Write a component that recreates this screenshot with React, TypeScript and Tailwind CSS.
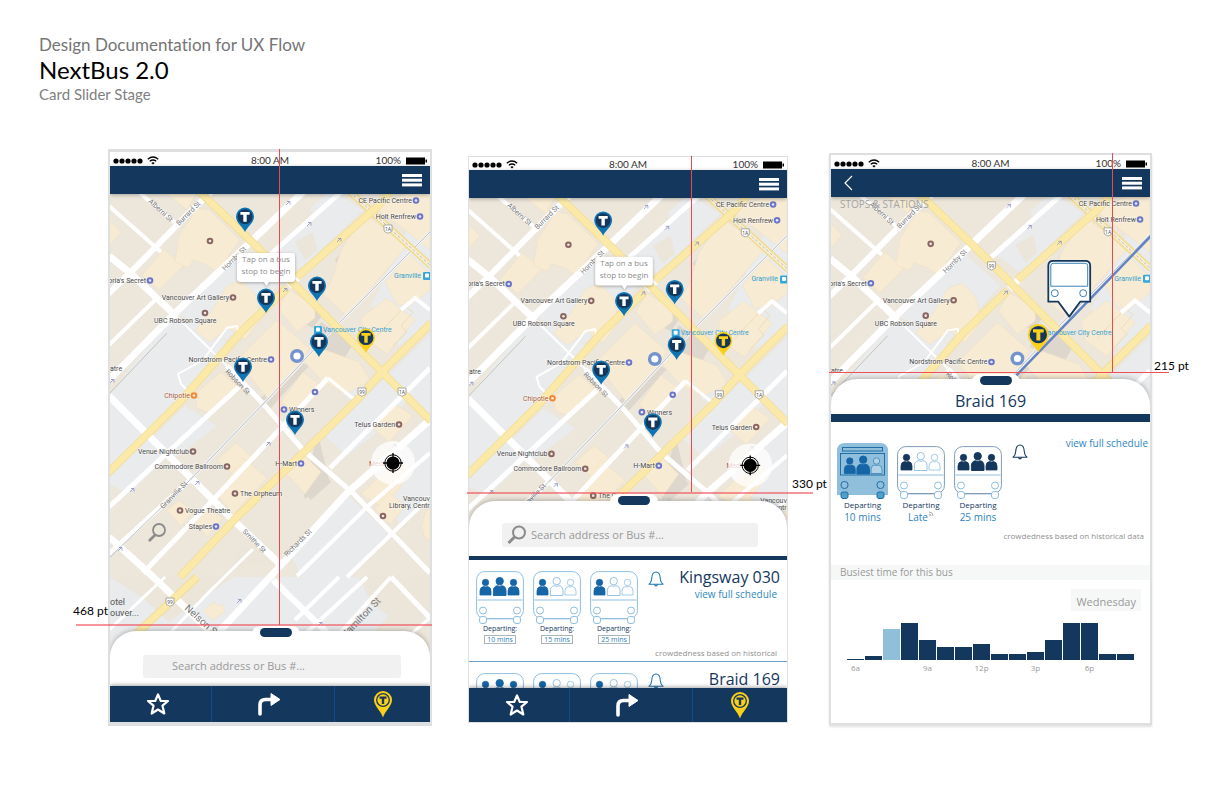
import React, { type ReactNode } from "react";

const NAVY = "#14375e";

/* ---------- Map ---------- */

const greyBlocks = [
  "1,199 60,126 106,131 118,150 106,170 0,278",
  "68,120 134,56 171,89 118,146 96,132",
  "0,288 76,212 108,232 60,268 0,214",
  "231,1 254,16 191,76 164,56",
  "201,14 218,0 232,0 206,26",
  "0,200 60,262 20,300 0,290",
  "300,32 321,22 321,128 290,152 262,112",
  "270,190 321,140 321,224 300,204 276,232 238,262 214,240",
  "262,276 321,228 321,300 290,330",
  "180,355 240,302 280,340 240,383 192,383",
  "0,383 321,383 321,492 0,492",
  "236,170 262,186 272,178 258,196 240,206 222,188",
];

const tanBlocks = [
  "186,48 204,38 208,56 196,66",
  "0,383 125,383 96,402 60,428 34,404",
  "250,383 321,383 321,420 290,430 262,408",
  "235,470 300,400 321,430 321,492 235,492",
  "125,352 162,352 162,372 125,372",
];

const shade = [
  "182,98 214,120 204,134 172,118",
  "212,128 244,150 232,170 200,150",
  "150,206 188,166 200,172 160,216",
  "209,240 220,286 196,305 194,296",
  "226,66 262,24 268,30 232,74",
  "206,264 222,288 202,306 194,298",
];

const buildings = [
  "55,55 74,72 50,96 33,81",
  "-2,24 12,38 -2,54",
  "70,42 88,14 100,16 131,46 108,78 96,70 84,66 80,74 66,68",
  "56,-2 88,-2 78,16",
  "118,92 132,86 146,100 152,124 136,146 120,134 100,148 86,136 102,118",
  "180,96 206,112 206,124 188,138 169,114",
  "232,56 256,20 298,52 238,122 214,100 222,88",
  "266,14 300,-2 321,-2 321,56 296,36",
  "276,88 300,60 321,80 321,96 300,112 288,110",
  "252,124 278,104 306,126 278,160 256,144",
  "128,166 168,126 200,154 192,172 160,206",
  "205,152 250,168 260,184 256,190 236,200 212,186 196,168",
  "86,200 112,178 130,194 104,220 88,214",
  "172,208 194,178 212,192 188,222",
  "108,266 127,249 142,262 124,280",
  "108,300 134,264 158,284 124,320",
  "176,278 196,262 212,278 196,300",
  "262,232 286,210 304,222 280,248",
  "252,300 290,264 302,278 276,314",
  "266,316 280,298 296,312 282,330",
  "58,316 70,307 84,317 72,332",
  "84,326 98,314 114,324 98,343",
  "95,417 104,408 109,412 113,410 116,418 104,426",
  "313,334 316,318 321,314 321,346 316,344",
];

const streets: [string, number][] = [
  ["31,-1 71,33", 4],
  ["0,12 52,58", 4],
  ["104,-4 81,18 21,79 -1,100", 6],
  ["196,-4 132,57 65,120 0,186", 7],
  ["232,-2 162,60", 5],
  ["193,79 180,92", 7],
  ["0,62 21,79 68,123", 7],
  ["68,123 118,172", 2],
  ["118,172 158,214 194,256 244,299 321,379", 5],
  ["0,202 61,263 121,323 174,373", 7],
  ["164,386 240,460", 6],
  ["0,343 41,380 104,440", 7],
  ["131,192 58,259 0,313", 5],
  ["219,184 174,232 104,306 34,379", 5],
  ["219,184 246,206", 3],
  ["46,106 0,151", 4],
  ["94,166 69,180 72,190 80,198", 2],
  ["94,166 118,134 128,132 130,142", 2],
  ["321,174 221,274", 5],
  ["321,226 238,299 174,369 108,440", 7],
  ["321,259 258,313 188,382", 4],
  ["321,303 238,383", 4],
  ["81,286 0,360", 5],
  ["292,116 306,104 321,116", 4],
  ["56,383 0,436", 3],
  ["144,355 100,398 60,440", 3],
  ["258,383 196,440", 4],
  ["230,383 186,426", 4],
  ["282,383 230,440", 4],
  ["282,383 321,424", 5],
  ["321,424 290,450", 3],
];

const yellows = [
  "281,-2 268,13 188,83",
  "178,94 134,136 71,208 -2,280",
  "91,-2 144,49 184,89 273,178 322,227",
  "322,129 273,178 248,206 194,259 128,323 71,383",
  "88,383 22,445",
];

const BROWN = "#8a6660";
const VIOLET = "#6c74c9";
const ORANGE = "#f58634";

type Poi = { x: number; y: number; t: string; end?: boolean; dot?: string; ink?: string };

const pois: Poi[] = [
  { x: 303, y: 9, t: "CE Pacific Centre", end: true, dot: VIOLET },
  { x: 307, y: 25, t: "Holt Renfrew", end: true, dot: VIOLET },
  { x: 37, y: 89, t: "oria's Secret", end: true, dot: VIOLET },
  { x: 120, y: 106, t: "Vancouver Art Gallery", end: true, dot: BROWN },
  { x: 45, y: 129, t: "UBC Robson Square" },
  { x: 158, y: 168, t: "Nordstrom Pacific Centre", end: true, dot: VIOLET },
  { x: 1, y: 177, t: "atre" },
  { x: 81, y: 204, t: "Chipotle", end: true, dot: ORANGE, ink: "#a65a3c" },
  { x: 180, y: 218, t: "Winners", dot: VIOLET },
  { x: 286, y: 233, t: "Telus Garden", end: true, dot: BROWN },
  { x: 80, y: 260, t: "Venue Nightclub", end: true, dot: BROWN },
  { x: 114, y: 275, t: "Commodore Ballroom", end: true, dot: BROWN },
  { x: 188, y: 272, t: "H-Mart", end: true, dot: VIOLET },
  { x: 260, y: 272, t: "Medi", ink: "#a8483f" },
  { x: 131, y: 302, t: "The Orpheum", dot: BROWN },
  { x: 76, y: 319, t: "Vogue Theatre", dot: BROWN },
  { x: 103, y: 335, t: "Staples", end: true, dot: VIOLET },
  { x: 294, y: 307, t: "Vancouver" },
  { x: 280, y: 314, t: "Library, Central" },
];

const streetNames: [number, number, number, string][] = [
  [39, 8, 42, "Alberni St"],
  [70, 32, -45, "Burrard St"],
  [116, 77, -45, "Hornby St"],
  [116, 178, 46, "Robson St"],
  [54, 315, -45, "Granville St"],
  [133, 338, 45, "Smithe St"],
  [178, 363, -45, "Richards St"],
];

const shields: [number, number, string][] = [
  [279, 35, "1A"],
  [162, 69, "99"],
  [253, 198, "99"],
  [293, 198, "1A"],
  [61, 408, "99"],
];

const oneWays = [
  [179, 9], [200, 30], [230, 46], [176, 96], [159, 250], [88, 289],
  [23, 296], [285, 252], [130, 407], [211, 430], [11, 355], [3, 187],
];

function Dot({ x, y, c }: { x: number; y: number; c: string }) {
  return (
    <g>
      <circle cx={x} cy={y} r="3.300" fill={c} />
      <circle cx={x} cy={y} r="1.300" fill="#fff" opacity="0.85" />
    </g>
  );
}

function Shield({ x, y, t }: { x: number; y: number; t: string }) {
  return (
    <g>
      <path
        d={`M${x - 4} ${y - 4}h8v5q0 2 -2.5 2.5l-1.5 .8l-1.5 -.8q-2.5 -.5 -2.5 -2.5z`}
        fill="#fff"
        stroke="#8b8b8b"
        strokeWidth="0.7"
      />
      <text x={x} y={y + 2} fontSize="5" textAnchor="middle" fill="#555">
        {t}
      </text>
    </g>
  );
}

function CityMap({ className, depth, children }: { className: string; depth: number; children?: ReactNode }) {
  return (
    <svg
      viewBox="1 0 320 464"
      preserveAspectRatio="xMinYMin slice"
      className={`block w-full font-[Roboto,sans-serif] ${className}`}
      role="img"
      aria-label="Map of downtown Vancouver"
    >
      <rect x="0" y="0" width="322" height="492" fill="#ece6db" />
      {greyBlocks.map((p) => (
        <polygon key={p} points={p} fill="#e9ebed" />
      ))}
      {tanBlocks.map((p) => (
        <polygon key={p} points={p} fill="#ece5d9" />
      ))}
      {shade.map((p) => (
        <polygon key={p} points={p} fill="#ddd7ce" />
      ))}
      {buildings.map((p) => (
        <polygon key={p} points={p} fill="#f8ebd3" stroke="#f0dfc0" strokeWidth="0.5" />
      ))}
      <polyline points="268,142 296,112 304,118 292,132 298,138 284,152" stroke="#ecd9ae" strokeWidth="0.8" fill="none" />
      {streets.map(([p, w]) => (
        <polyline key={p} points={p} fill="none" stroke="#fff" strokeWidth={w} />
      ))}
      <polyline points="58,139 0,200" stroke="#bdb9a6" strokeWidth="0.8" fill="none" />
      <polyline points="321,38 226,133 158,206 81,286" stroke="#f3f3f3" strokeWidth="3" fill="none" />
      <polyline points="321,38 226,133 158,206 81,286 1,363" stroke="#b0b4bb" strokeWidth="0.8" fill="none" />
      <polyline points="241,-2 322,72" stroke="#f2dc92" strokeWidth="7" fill="none" />
      <polyline points="241,-2 322,72" stroke="#f5efdc" strokeWidth="3.500" fill="none" />
      <polyline points="241,-2 322,72" stroke="#a39a80" strokeWidth="0.6" strokeDasharray="3 2" fill="none" />
      {yellows.map((p) => (
        <polyline key={p} points={p} fill="none" stroke="#f3dd93" strokeWidth="8" strokeLinejoin="round" />
      ))}
      {yellows.map((p) => (
        <polyline key={p} points={p} fill="none" stroke="#fbe9a9" strokeWidth="6.500" strokeLinejoin="round" />
      ))}
      {oneWays.map(([x, y]) => (
        <path key={`${x}-${y}`} d={`M${x - 2} ${y + 2}l4 -4m-3 .5h3v3`} stroke="#8b93c4" strokeWidth="0.8" fill="none" />
      ))}
      {streetNames.filter(([, y]) => y < depth).map(([x, y, a, t]) => (
        <text key={t} x={x} y={y} transform={`rotate(${a} ${x} ${y})`} fontSize="7" fill="#777">
          {t}
        </text>
      ))}
      {pois.filter((p) => p.y < depth).map((p) => (
        <g key={p.t}>
          <text
            x={p.x}
            y={p.y}
            fontSize="7"
            textAnchor={p.end ? "end" : "start"}
            fill={p.ink ?? "#4a4a4a"}
            stroke="#fff"
            strokeWidth="1.200"
            strokeOpacity="0.6"
            paintOrder="stroke"
          >
            {p.t}
          </text>
          {p.dot && <Dot x={p.end ? p.x + 4 : p.x - 5} y={p.y - 2.5} c={p.dot} />}
        </g>
      ))}
      <Dot x={101} y={47} c={BROWN} />
      <Dot x={96} y={119} c={BROWN} />
      <Dot x={206} y={198} c={VIOLET} />
      <Dot x={274} y={322} c={BROWN} />
      <text x="312" y="84" fontSize="7" textAnchor="end" fill="#2f9fd0">Granville</text>
      <rect x="314" y="78" width="8" height="8" rx="1" fill="#35a8dc" />
      <rect x="316" y="79.500" width="4" height="4" rx="1" fill="#fff" />
      <text x="214" y="138" fontSize="7" fill="#35a3d3">Vancouver City Centre</text>
      {shields.filter(([, y]) => y < depth).map(([x, y, t]) => (
        <Shield key={`${x}-${y}`} x={x} y={y} t={t} />
      ))}
      {depth > 420 && (
        <g>
          <text x="1" y="411" fontSize="9" fill="#555">otel</text>
          <text x="1" y="422" fontSize="9" fill="#555">ouver...</text>
          <text x="75" y="415" fontSize="10" fill="#777" transform="rotate(42 75 415)">Nelson St</text>
          <text x="236" y="445" fontSize="10" fill="#777" transform="rotate(-46 236 445)">Hamilton St</text>
        </g>
      )}
      {children}
    </svg>
  );
}

function StopPin({ x, y, color = "#0f75b2", letter = "#fff", scale = 1 }: {
  x: number; y: number; color?: string; letter?: string; scale?: number;
}) {
  return (
    <g transform={`translate(${x} ${y}) scale(${scale})`}>
      <path d="M0 0C-2 -5 -9 -9 -9 -15.500A9 9 0 0 1 9 -15.500C9 -9 2 -5 0 0Z" fill={color} />
      <circle cx="0" cy="-15.300" r="7.400" fill={NAVY} />
      <path d="M-4.600 -20H4.600V-17.200H1.700V-10.300H-1.700V-17.200H-4.600Z" fill={letter} />
    </g>
  );
}

function Here() {
  return (
    <g>
      <circle cx="188" cy="162" r="7" fill="#7394cd" />
      <circle cx="188" cy="162" r="3.600" fill="#fff" />
    </g>
  );
}

function StopsOverlay() {
  return (
    <g>
      <rect x="205" y="132" width="8" height="8" rx="1" fill="#35a8dc" />
      <rect x="207" y="133.500" width="4" height="4" rx="1" fill="#fff" />
      <Here />
      <StopPin x={136} y={38} />
      <g filter="drop-shadow(0 1px 1.500px rgba(0,0,0,.3))">
        <path d="M131 59H183a3 3 0 0 1 3 3V85a3 3 0 0 1 -3 3H160L157.500 92L155 88H131a3 3 0 0 1 -3 -3V62a3 3 0 0 1 3 -3Z" fill="#fff" />
      </g>
      <g fontFamily="'Open Sans', sans-serif" fontSize="8" fill="#8c8c8c" textAnchor="middle">
        <text x="157" y="68">Tap on a bus</text>
        <text x="157" y="80">stop to begin</text>
      </g>
      <StopPin x={157} y={119} />
      <StopPin x={208} y={107} />
      <StopPin x={210} y={163} />
      <StopPin x={134} y={188} />
      <StopPin x={186} y={241} />
      <StopPin x={257} y={159} color="#fbd01a" letter="#fbd01a" />
      <circle cx="284" cy="269" r="22" fill="#fff" opacity="0.75" />
      <circle cx="284" cy="269" r="6.600" fill="#000" />
      <circle cx="284" cy="269" r="8.200" fill="none" stroke="#000" strokeWidth="1" />
      <path d="M284 259v4M284 275v4M274 269h4M290 269h4" stroke="#000" strokeWidth="1.300" />
    </g>
  );
}

/* ---------- Phone chrome ---------- */

function StatusBar({ className = "h-[14px]" }: { className?: string }) {
  return (
    <div className={`flex items-end bg-white px-[3px] font-[Lato,'Open_Sans',sans-serif] text-[10px] leading-[11px] text-[#333] ${className}`}>
      <div className="flex flex-1 items-center gap-1 pb-[1px]">
        <svg viewBox="0 0 30 6" className="h-[6px] w-[30px]" aria-hidden="true">
          {[3, 9, 15, 21, 27].map((x) => (
            <circle key={x} cx={x} cy="3" r="2.600" />
          ))}
        </svg>
        <svg viewBox="0 0 12 9" className="h-[9px] w-[12px]" fill="none" stroke="#000" strokeWidth="1.300" aria-hidden="true">
          <path d="M.8 3.300Q6 -1.200 11.200 3.300M2.800 5.300Q6 2.700 9.200 5.300" />
          <path d="M4.300 7Q6 5.500 7.700 7L6 8.600Z" fill="#000" stroke="none" />
        </svg>
      </div>
      <span>8:00 AM</span>
      <div className="flex flex-1 items-center justify-end gap-[5px]">
        <span>100%</span>
        <svg viewBox="0 0 21 8" className="h-[8px] w-[21px]" aria-hidden="true">
          <rect x="0" y="0.500" width="19" height="7" />
          <rect x="19.500" y="2.500" width="1.500" height="3" />
        </svg>
      </div>
    </div>
  );
}

function Header({ back = false }: { back?: boolean }) {
  return (
    <div className="relative z-10 flex h-7 items-center bg-[#14375e] px-2 shadow-[0_1px_4px_rgba(0,0,0,0.3)]">
      {back && (
        <button type="button" aria-label="Back" className="ml-1">
          <svg viewBox="0 0 10 16" className="h-4 w-[10px]" fill="none" stroke="#fff" strokeWidth="1.200">
            <path d="M9 1L2 8L9 15" />
          </svg>
        </button>
      )}
      <button type="button" aria-label="Menu" className="ml-auto">
        <svg viewBox="0 0 20 13" className="h-[13px] w-5" fill="#fff">
          <rect width="20" height="3" y="0" />
          <rect width="20" height="3" y="4.700" />
          <rect width="20" height="3" y="9.400" />
        </svg>
      </button>
    </div>
  );
}

function NavBar({ className }: { className: string }) {
  return (
    <nav className={`relative z-10 grid grid-cols-[102fr_124fr_95fr] divide-x divide-[#0f4d8c] bg-[#14375e] shadow-[0_-1px_4px_rgba(0,0,0,0.35)] ${className}`}>
      <button type="button" aria-label="Favourites" className="flex items-center justify-center pr-1">
        <svg viewBox="0 0 24 24" className="h-6 w-6" fill="none" stroke="#fff" strokeWidth="2.200" strokeLinejoin="round">
          <path d="M12 2.500L14.800 9H22L16.500 13.700L18.300 21.500L12 17.500L5.700 21.500L7.500 13.700L2 9H9.200Z" />
        </svg>
      </button>
      <button type="button" aria-label="Directions" className="flex items-center justify-center pr-2">
        <svg viewBox="0 0 24 24" className="h-6 w-6" fill="none">
          <path d="M3 22V13Q3 7.500 8.500 7.500H15" stroke="#fff" strokeWidth="3.600" strokeLinecap="round" />
          <path d="M14 1.500L23 7.500L14 13.500Z" fill="#fff" stroke="#fff" strokeLinejoin="round" />
        </svg>
      </button>
      <button type="button" aria-label="Nearby stops" className="flex items-center justify-center">
        <svg viewBox="0 0 20 28" className="h-7 w-5">
          <path d="M10 27.500C8 21 1 16 1 10A9 9 0 0 1 19 10C19 16 12 21 10 27.500Z" fill="#fbd01a" />
          <circle cx="10" cy="10" r="6.300" fill="#fbd01a" stroke={NAVY} strokeWidth="1.300" />
          <path d="M6.500 6.500H13.500V8.700H11.200V14H8.800V8.700H6.500Z" fill={NAVY} />
        </svg>
      </button>
    </nav>
  );
}

function Phone({ className, guides, children }: { className: string; guides: ReactNode; children: ReactNode }) {
  return (
    <section className="relative">
      <div className={`overflow-hidden border-[#dddfe0] bg-white ${className}`}>{children}</div>
      <div className="pointer-events-none absolute inset-0 z-20 font-[Lato,'Open_Sans',sans-serif] text-[12px] leading-4 whitespace-nowrap text-black">
        {guides}
      </div>
    </section>
  );
}

function Sheet({ className = "", children }: { className?: string; children: ReactNode }) {
  return (
    <div className={`relative -mt-[27px] rounded-t-[26px] bg-white shadow-[0_-1px_5px_rgba(0,0,0,0.25)] ${className}`}>
      {children}
    </div>
  );
}

function Grip({ className }: { className: string }) {
  return (
    <button
      type="button"
      aria-label="Drag card"
      className={`absolute flex h-3 w-12 justify-center rounded-t-lg bg-white pt-[2px] ${className}`}
    >
      <span className="h-[9px] w-8 rounded-full bg-[#14375e]" />
    </button>
  );
}

/* ---------- Bus artwork ---------- */

function Person({ x, y, big, full, fill, line }: {
  x: number; y: number; big?: boolean; full: boolean; fill: string; line: string;
}) {
  return (
    <g
      transform={`translate(${x} ${y}) scale(${big ? 1.15 : 1})`}
      fill={full ? fill : "#fff"}
      fillOpacity={full ? 1 : 0.3}
      stroke={full ? fill : line}
      strokeWidth="0.8"
    >
      <path d="M-5.500 0V-4Q-5.500 -8 -2 -8.500Q0 -7.600 2 -8.500Q5.500 -8 5.500 -4V0Z" />
      <circle cx="0" cy="-12.500" r="3.200" />
    </g>
  );
}

function Bus({ riders, fill = "#1565a7", line = "#8fbfe0", frame = "#8fbfe0" }: {
  riders: number; fill?: string; line?: string; frame?: string;
}) {
  return (
    <svg viewBox="0 0 48 53" className="h-[53px] w-12" fill="none" aria-hidden="true">
      <rect x="0.600" y="0.600" width="46.800" height="47" rx="8" fill="#fff" stroke={frame} strokeWidth="1" />
      <path d="M1.500 29H46.500" stroke={line} />
      <path d="M5 47.600H43" stroke={frame} strokeWidth="1.200" />
      {[7, 41].map((x) => (
        <g key={x} stroke={line} fill="#fff">
          <circle cx={x} cy="39.500" r="3.500" />
          <rect x={x - 3.5} y="45.500" width="7" height="7" rx="2.500" />
        </g>
      ))}
      <Person x={9.5} y={24} full={riders > 0} fill={fill} line={line} />
      <Person x={37.5} y={24} full={riders > 2} fill={fill} line={line} />
      <Person x={23.7} y={24.5} big full={riders > 1} fill={fill} line={line} />
    </svg>
  );
}

function ActiveBus() {
  return (
    <svg viewBox="0 0 51 56" className="h-14 w-[51px]" fill="none" stroke="#1f6ea8" aria-hidden="true">
      <path d="M0 52V8Q0 0 8 0H43Q51 0 51 8V52Z" fill="#90bfdc" stroke="none" />
      <rect x="5.500" y="4.500" width="40" height="3.500" />
      <rect x="3.500" y="10.500" width="44" height="21.500" />
      {[7.5, 43.5].map((x) => (
        <g key={x}>
          <circle cx={x} cy="42" r="3.600" />
          <rect x={x - 3.5} y="49" width="7" height="6.500" rx="2" fill="#4f9fca" />
        </g>
      ))}
      <Person x={12.8} y={30.5} full fill="#1565a7" line="#1f6ea8" />
      <Person x={39.5} y={30.5} full={false} fill="#1565a7" line="#3c83b5" />
      <Person x={26.2} y={31} big full fill="#1565a7" line="#1f6ea8" />
    </svg>
  );
}

function Bell({ color }: { color: string }) {
  return (
    <svg viewBox="0 0 16 16" className="h-4 w-4" fill="none" stroke={color} strokeWidth="1.100" strokeLinejoin="round" aria-hidden="true">
      <path d="M1 13.300Q3.500 11.500 3.700 7.500C3.900 3.500 5.500 1 8 1S12.100 3.500 12.300 7.500Q12.500 11.500 15 13.300Z" />
      <path d="M6.300 13.500Q8 16.200 9.700 13.500" />
    </svg>
  );
}

/* ---------- Cards ---------- */

function RouteCard({ name, loads }: { name: string; loads: [number, string][] }) {
  return (
    <article className="flex h-[102px] items-start border-b border-[#6d9fc9] px-[7px] pt-[11px]">
      <ul className="flex shrink-0 gap-[9px]">
        {loads.map(([riders, time]) => (
          <li key={time} className="flex w-12 flex-col items-center text-[7px] leading-[10px] text-[#14375e]">
            <Bus riders={riders} />
            <span>Departing:</span>
            <span className="mt-[1px] border border-[#a9b4bb] px-[2px] leading-[7px] text-[#2c80b9]">{time}</span>
          </li>
        ))}
      </ul>
      <button type="button" aria-label={`Alert me for ${name}`} className="ml-[10px] shrink-0">
        <Bell color="#1d74b3" />
      </button>
      <div className="flex h-full min-w-0 flex-1 flex-col items-end">
        <h2 className="-mt-[5px] text-[16px] leading-[22px] whitespace-nowrap text-[#14375e]">{name}</h2>
        <a href="#schedule" className="mr-[3px] text-[10px] leading-[12px] whitespace-nowrap text-[#2e86be]">view full schedule</a>
        <p className="mt-auto mr-[3px] mb-[3px] text-[8px] leading-[11px] whitespace-nowrap text-[#8f8f8f]">crowdedness based on historical</p>
      </div>
    </article>
  );
}

function Magnifier({ className }: { className: string }) {
  return (
    <svg viewBox="0 0 20 20" className={className} fill="none" stroke="#8b8b8b" aria-hidden="true">
      <circle cx="12" cy="7.500" r="6" strokeWidth="2" />
      <path d="M7.500 12L1.500 18" strokeWidth="3" />
    </svg>
  );
}

const bars: { h: number; label?: string; now?: boolean }[] = [
  { h: 1, label: "6a" }, { h: 4 }, { h: 31, now: true }, { h: 37 },
  { h: 20, label: "9a" }, { h: 13 }, { h: 13 }, { h: 16, label: "12p" },
  { h: 6 }, { h: 6 }, { h: 8, label: "3p" }, { h: 20 },
  { h: 37 }, { h: 37, label: "6p" }, { h: 6 }, { h: 6 },
];

const departures = [
  { label: "Departing", time: "10 mins", bus: <ActiveBus /> },
  { label: "Departing", time: "Late", bus: <Bus riders={1} fill={NAVY} frame="#7f9cb8" /> },
  { label: "Departing", time: "25 mins", bus: <Bus riders={3} fill={NAVY} frame="#7f9cb8" /> },
];

export default function App() {
  return (
    <main className="min-h-screen bg-white pt-9 pb-16 font-['Open_Sans','Noto_Sans',sans-serif]">
      <header className="pl-[39px] font-[Lato,'Open_Sans',sans-serif] [font-variant-ligatures:none]">
        <p className="text-[17px] leading-[18px] text-[#757575]">Design Documentation for UX Flow</p>
        <h1 className="text-[24px] leading-[31px] text-black">NextBus 2.0</h1>
        <p className="text-[15px] leading-[18px] text-[#808080]">Card Slider Stage</p>
      </header>

      <div className="mt-[46px] grid grid-cols-[minmax(0,324fr)_minmax(0,320fr)_minmax(0,328fr)] items-start gap-x-9 pr-[72px] pl-[108px]">
        <Phone
          className="border-x-2 border-t-[3px] border-b-4"
          guides={
            <>
              <div className="absolute top-0 left-[171px] h-[476px] w-px bg-[#e84850]" />
              <div className="absolute top-[475px] right-0 -left-8 h-[2px] bg-[#f0505a]/60" />
              <p className="absolute top-[454px] right-full">468 pt</p>
            </>
          }
        >
          <StatusBar />
          <Header />
          <CityMap className="h-[464px]" depth={464}>
            <StopsOverlay />
            <g fill="none" stroke="#8b8b8b">
              <circle cx="50" cy="336" r="6" strokeWidth="1.800" />
              <path d="M46 341L40 347" strokeWidth="2.700" />
            </g>
          </CityMap>
          <Sheet className="h-[55px] pt-6 pr-[29px] pl-[33px]">
            <Grip className="-top-[5px] left-[142px]" />
            <label className="flex h-[23px] rounded-[3px] bg-[#f1f1f1]">
              <span className="sr-only">Search</span>
              <input type="search" placeholder="Search address or Bus #..." className="w-full bg-transparent pr-2 pl-[29px] text-[11px] text-[#666] outline-none placeholder:text-[#999]" />
            </label>
          </Sheet>
          <NavBar className="h-9" />
        </Phone>

        <div className="pt-[7px]">
          <Phone
            className="border"
            guides={
              <>
                <div className="absolute top-0 left-[223px] h-[336px] w-px bg-[#e84850]" />
                <div className="absolute top-[336px] -right-[25px] -left-px h-[2px] bg-[#f0505a]/60" />
                <p className="absolute top-[320px] left-full ml-1">330 pt</p>
              </>
            }
          >
            <StatusBar className="h-[13px]" />
            <Header />
            <CityMap className="h-[330px]" depth={330}>
              <StopsOverlay />
            </CityMap>
            <Sheet>
              <Grip className="-top-[7px] left-[141px]" />
              <div className="border-b-4 border-[#14375e] pt-[22px] pr-[29px] pb-[9px] pl-[33px]">
                <label className="flex h-6 items-center gap-1 rounded-[3px] bg-[#f1f1f1] pl-[5px]">
                  <span className="sr-only">Search</span>
                  <Magnifier className="h-5 w-5 shrink-0" />
                  <input type="search" placeholder="Search address or Bus #..." className="w-full bg-transparent text-[11px] text-[#666] outline-none placeholder:text-[#999]" />
                </label>
              </div>
              <div className="h-32 overflow-hidden">
                <RouteCard name="Kingsway 030" loads={[[3, "10 mins"], [1, "15 mins"], [1, "25 mins"]]} />
                <RouteCard name="Braid 169" loads={[[3, "10 mins"], [1, "15 mins"], [1, "25 mins"]]} />
              </div>
            </Sheet>
            <NavBar className="h-[34px]" />
          </Phone>
        </div>

        <div className="pt-1 pl-[5px]">
          <Phone
            className="border-2 shadow-[0_2px_2px_rgba(0,0,0,0.12)]"
            guides={
              <>
                <div className="absolute top-0 left-[283px] h-[219px] w-px bg-[#e84850]" />
                <div className="absolute top-[219px] -right-[17px] left-0 h-px bg-[#f0505a]" />
                <p className="absolute top-[205px] left-full ml-[2px]">215 pt</p>
              </>
            }
          >
            <StatusBar />
            <Header back />
            <CityMap className="h-[209px]" depth={209}>
              <text x="10" y="11" fontSize="10" fontFamily="'Open Sans', sans-serif" fill="#a5a5a5">STOPS &amp; STATIONS</text>
              <path d="M322 39L185 181" stroke="#6284c4" strokeWidth="2.500" />
              <Here />
              <StopPin x={209} y={156} scale={1.17} color="#fbd01a" letter="#fbd01a" />
              <path d="M219 105V69Q219 64 224 64H256Q261 64 261 69V105H251L240 120L229 105Z" fill="#fff" stroke={NAVY} strokeWidth="1.800" strokeLinejoin="round" />
              <path d="M221.500 89.500V69Q221.500 66.500 224 66.500H256Q258.500 66.500 258.500 69V89.500Z" fill="none" stroke="#3a82b6" />
              <circle cx="225.500" cy="96.500" r="3.500" fill="none" stroke="#3a82b6" />
              <circle cx="254" cy="96.500" r="3.500" fill="none" stroke="#3a82b6" />
            </CityMap>
            <Sheet className="h-[344px]">
              <Grip className="-top-[5px] left-[141px]" />
              <h2 className="h-[35px] pt-[11px] text-center text-[16px] leading-[22px] text-[#14375e]">Braid 169</h2>
              <div className="h-2 bg-[#14375e]" />

              <div className="flex items-start px-[6px] pt-[21px]">
                <ul className="flex items-end gap-[9px]">
                  {departures.map((d) => (
                    <li key={d.time} className="flex flex-col items-center text-[8px] leading-[12px] text-[#14375e]">
                      {d.bus}
                      <span>{d.label}</span>
                      <span className="flex text-[10px] text-[#2e86be]">
                        {d.time}
                        {d.time === "Late" && (
                          <svg viewBox="0 0 6 6" className="h-[6px] w-[6px]" fill="none" stroke="#888" strokeWidth="0.700" aria-hidden="true">
                            <path d="M1 1Q5 1 5 5M1 3Q3 3 3 5M1 5h.5" />
                          </svg>
                        )}
                      </span>
                    </li>
                  ))}
                </ul>
                <button type="button" aria-label="Alert me for Braid 169" className="mt-[1px] ml-[10px]">
                  <Bell color={NAVY} />
                </button>
                <a href="#schedule" className="-mt-[6px] -mr-[4px] ml-auto text-[10px] leading-[12px] whitespace-nowrap text-[#2e86be]">view full schedule</a>
              </div>
              <p className="mt-[7px] pr-[6px] text-right text-[8px] leading-[11px] text-[#8f8f8f]">crowdedness based on historical data</p>

              <h3 className="mt-6 bg-[#f6f8f8] pl-[9px] text-[10px] leading-[15px] text-[#999]">Busiest time for this bus</h3>
              <div className="flex justify-end pt-[9px] pr-[9px]">
                <button type="button" className="bg-[#f6f8f8] px-[5px] pt-[3px] text-[11px] leading-[19px] text-[#999]">Wednesday</button>
              </div>
              <ol className="mt-3 flex h-[50px] items-end gap-px px-4">
                {bars.map((b, i) => (
                  <li key={i} className="flex flex-1 flex-col items-center">
                    <div className={b.now ? "w-full bg-[#90bfdc]" : "w-full bg-[#14375e]"} style={{ height: b.h }} />
                    <span className="flex h-[13px] w-0 items-end justify-center text-[8px] leading-[11px] whitespace-nowrap text-[#999]">{b.label}</span>
                  </li>
                ))}
              </ol>
            </Sheet>
          </Phone>
        </div>
      </div>
    </main>
  );
}
